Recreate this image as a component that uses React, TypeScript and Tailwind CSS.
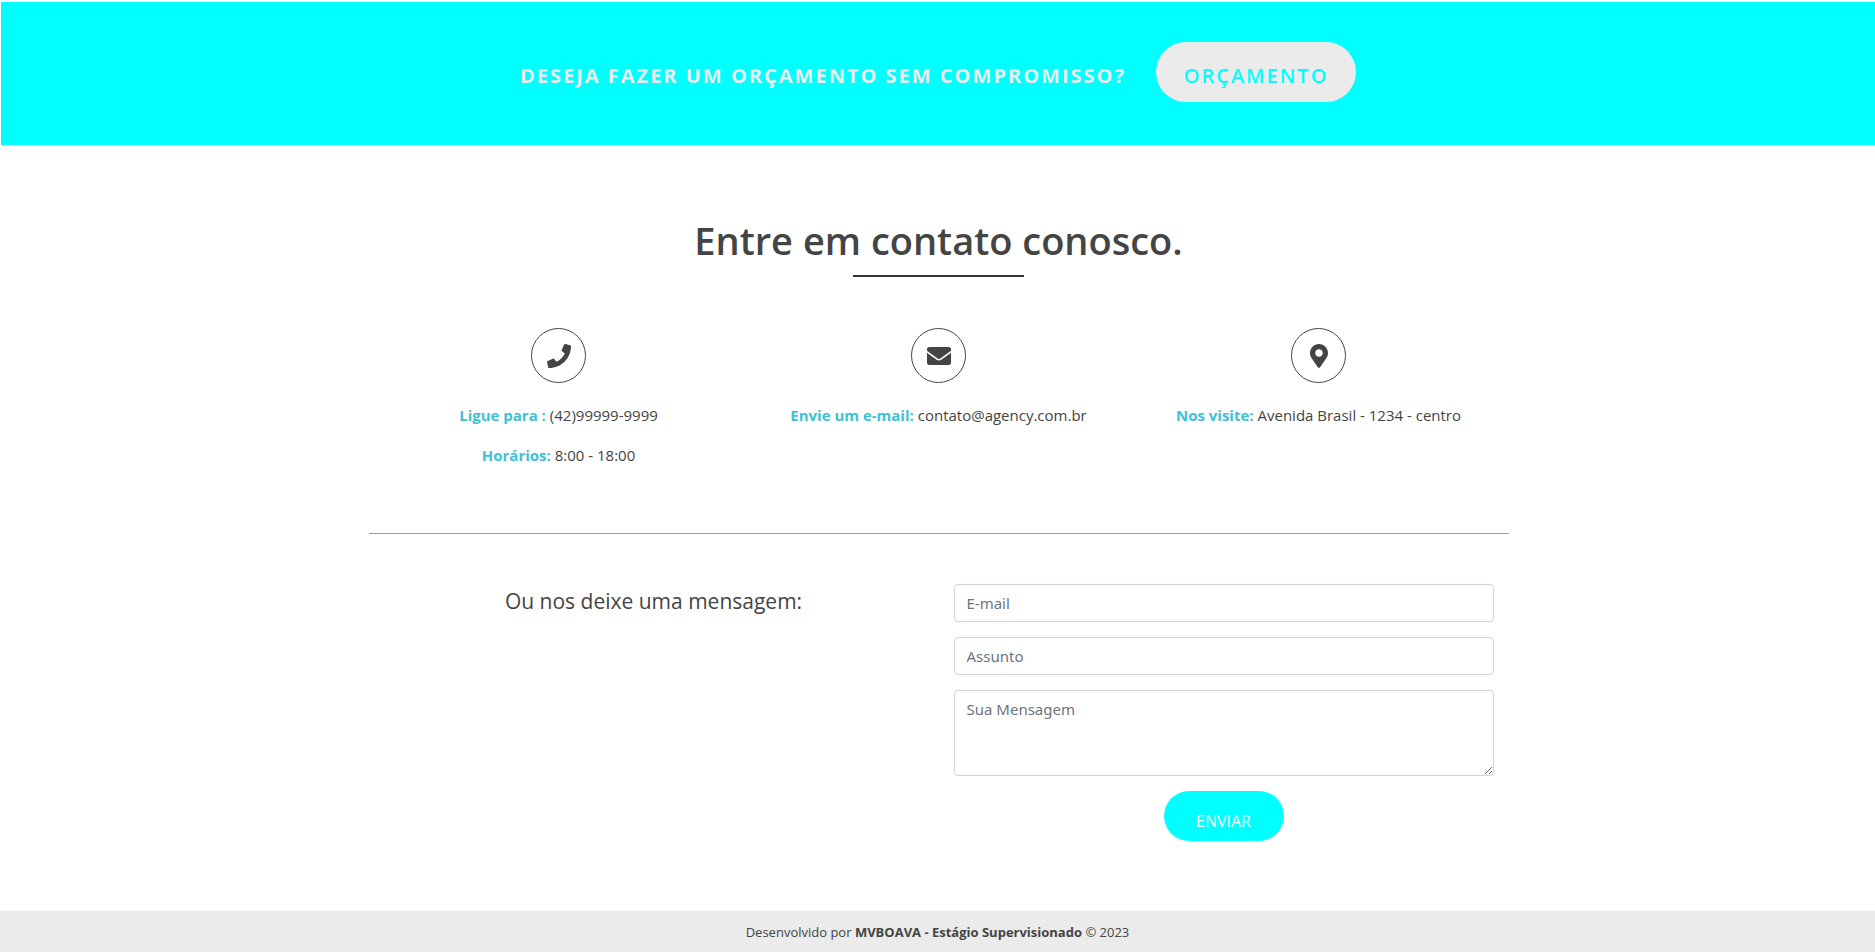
import { FaEnvelope, FaMapMarkerAlt, FaPhone } from "react-icons/fa";
import type { ReactNode } from "react";

const fieldClass =
  "block w-full rounded-[4px] border border-[#ced4da] bg-white px-3 py-[6px] font-['Noto_Sans',sans-serif] text-[15px] leading-[24px] text-[#495057] placeholder:text-[#6c757d] placeholder:opacity-100";

function Contact({ icon, children }: { icon: ReactNode; children: ReactNode }) {
  return (
    <div className="flex flex-1 flex-col items-center">
      <span className="mb-5 flex size-[55px] items-center justify-center rounded-full border border-[#444] text-[24px]">
        {icon}
      </span>
      <div className="flex flex-col gap-4 text-center">{children}</div>
    </div>
  );
}

function Info({ label, text }: { label: string; text: string }) {
  return (
    <p>
      <strong className="font-bold text-[#3ec1d5]">{label}</strong> {text}
    </p>
  );
}

export default function App() {
  return (
    <div className="bg-white pt-[2px] font-['Open_Sans','Noto_Sans',sans-serif] text-[15px] leading-[24px] text-[#444]">
      <section className="ml-px flex items-start justify-center gap-[30px] bg-[#00ffff] pt-10 pb-[43px]">
        <h2 className="pt-5 text-[20px] leading-[28px] font-bold tracking-[2px] text-[#ebebeb] uppercase">
          Deseja fazer um orçamento sem compromisso?
        </h2>
        <a
          href="#orcamento"
          className="h-[60px] w-[200px] rounded-[30px] bg-[#ebebeb] pt-5 text-center text-[20px] leading-[28px] font-semibold tracking-[2px] text-[#00ffff] uppercase"
        >
          Orçamento
        </a>
      </section>

      <div className="pl-[2px]">
        <main className="mx-auto max-w-[1140px]">
          <h3 className="pt-[71px] text-center text-[38px] leading-[48px] font-semibold">
            Entre em contato conosco.
          </h3>
          <div className="mx-auto mt-[11px] h-[2px] w-[15%] bg-[#333]" />

          <section className="mt-[51px] flex">
            <Contact icon={<FaPhone />}>
              <Info label="Ligue para :" text="(42)99999-9999" />
              <Info label="Horários:" text="8:00 - 18:00" />
            </Contact>
            <Contact icon={<FaEnvelope />}>
              <Info label="Envie um e-mail:" text="contato@agency.com.br" />
            </Contact>
            <Contact icon={<FaMapMarkerAlt />}>
              <Info label="Nos visite:" text="Avenida Brasil - 1234 - centro" />
            </Contact>
          </section>

          <hr className="mt-[66px] border-t border-[#3ec1d5]" />

          <section className="mt-[50px] flex">
            <p className="w-1/2 text-center text-[21px] leading-[34px]">Ou nos deixe uma mensagem:</p>
            <form className="flex w-1/2 flex-col items-center gap-[15px] px-[15px]">
              <input type="email" aria-label="E-mail" placeholder="E-mail" className={fieldClass} />
              <input type="text" aria-label="Assunto" placeholder="Assunto" className={fieldClass} />
              <textarea aria-label="Sua Mensagem" placeholder="Sua Mensagem" rows={3} className={fieldClass} />
              <button
                type="submit"
                className="h-[50px] w-[120px] rounded-[25px] bg-[#00ffff] pt-[10px] text-[16px] leading-[24px] text-white uppercase"
              >
                Enviar
              </button>
            </form>
          </section>
        </main>
      </div>

      <footer className="mt-[70px] bg-[#ebebeb] pt-[11px] pb-[9px] text-center text-[13px] leading-[21px]">
        Desenvolvido por <strong className="font-bold">MVBOAVA - Estágio Supervisionado</strong> © 2023
      </footer>
    </div>
  );
}
